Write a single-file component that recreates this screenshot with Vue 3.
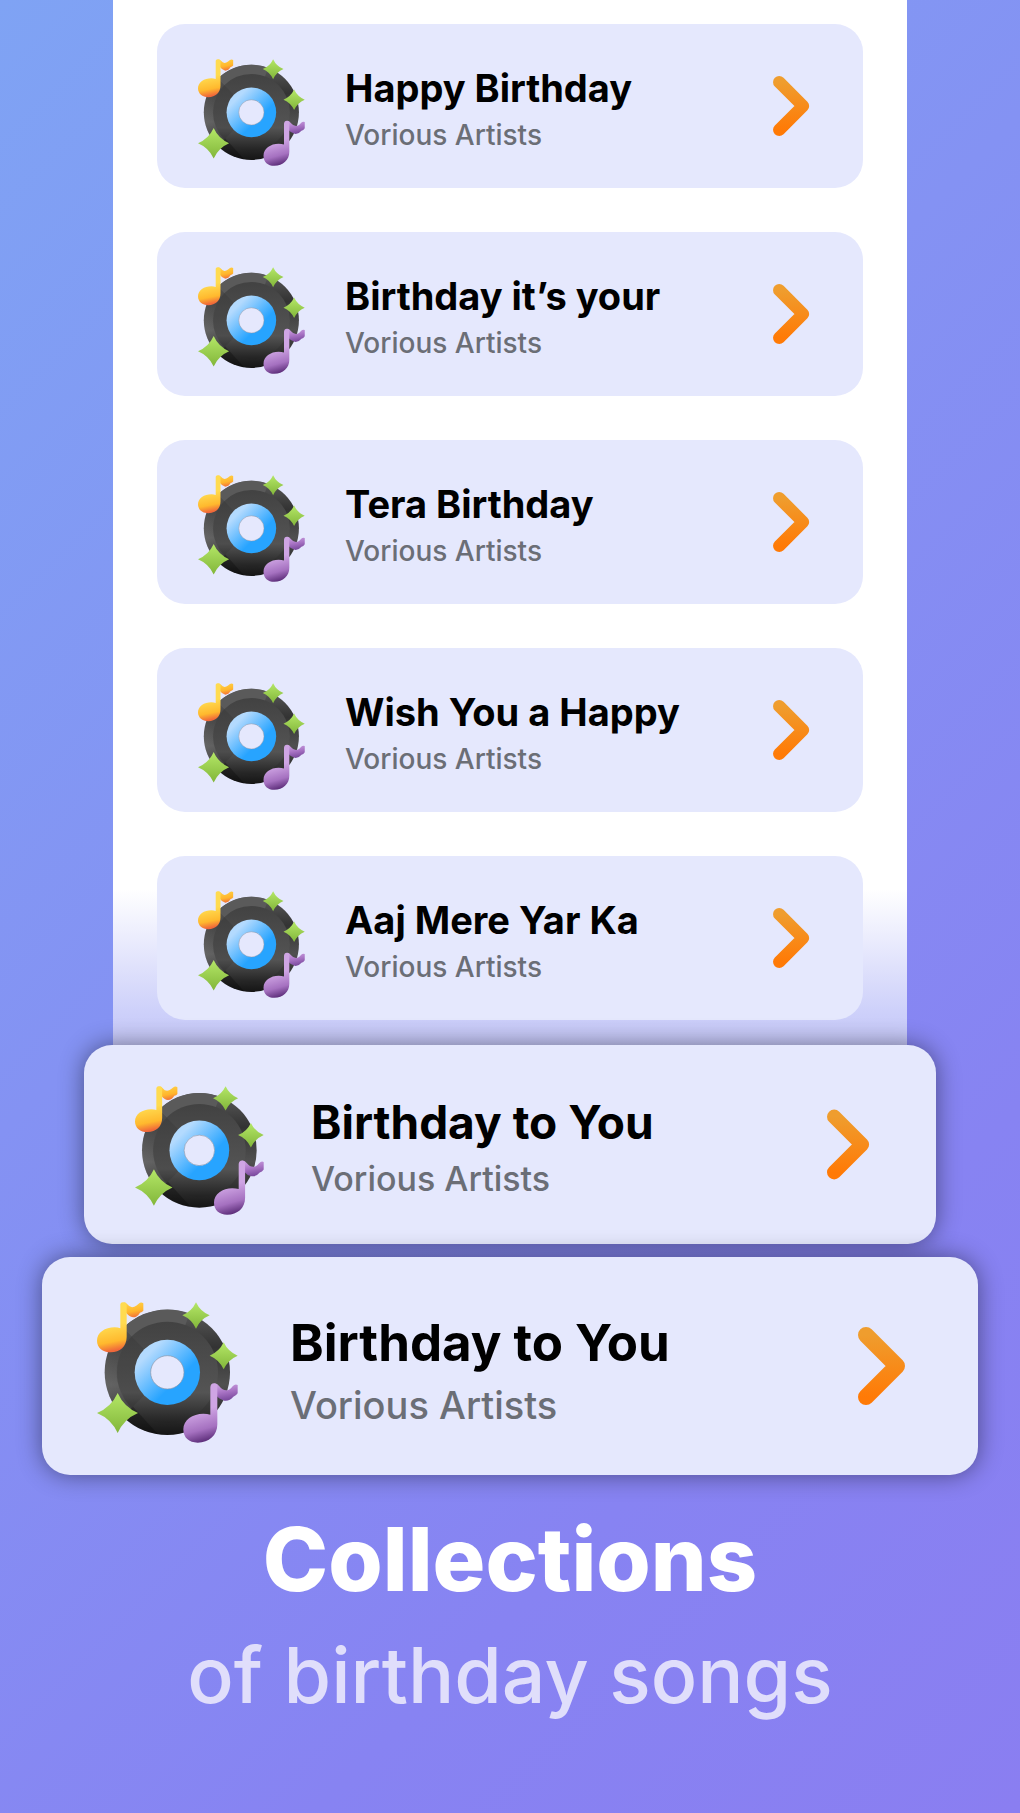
<template>
  <main class="songs">
    <svg class="songs__sprite" aria-hidden="true">
      <defs>
        <linearGradient id="rim" x1="0" y1="0" x2="0" y2="1">
          <stop offset="0" stop-color="#5a5a5a" />
          <stop offset="0.3" stop-color="#333" />
          <stop offset="0.6" stop-color="#505050" />
          <stop offset="0.85" stop-color="#2c2c2c" />
          <stop offset="1" stop-color="#151515" />
        </linearGradient>
        <linearGradient id="groove" x1="0" y1="0" x2="0" y2="1">
          <stop offset="0" stop-color="#424242" />
          <stop offset="0.7" stop-color="#545454" />
          <stop offset="1" stop-color="#222" />
        </linearGradient>
        <linearGradient id="shine" x1="0" y1="0" x2="1" y2="0">
          <stop offset="0" stop-color="#fff" stop-opacity="0.12" />
          <stop offset="1" stop-color="#fff" stop-opacity="0" />
        </linearGradient>
        <linearGradient id="blue" x1="0.15" y1="0.15" x2="0.8" y2="0.8">
          <stop offset="0.1" stop-color="#b3dafe" />
          <stop offset="0.75" stop-color="#27a4ff" />
        </linearGradient>
        <linearGradient id="green" x1="0" y1="0" x2="0" y2="1">
          <stop offset="0" stop-color="#b4e767" />
          <stop offset="1" stop-color="#82b63a" />
        </linearGradient>
        <linearGradient id="yellow" x1="60" y1="130" x2="75" y2="204" gradientUnits="userSpaceOnUse">
          <stop offset="0" stop-color="#ffdb50" />
          <stop offset="0.65" stop-color="#ffb92e" />
          <stop offset="1" stop-color="#f0683a" />
        </linearGradient>
        <linearGradient id="yellow-flag" x1="140" y1="54" x2="150" y2="104" gradientUnits="userSpaceOnUse">
          <stop offset="0" stop-color="#ffd54a" />
          <stop offset="0.6" stop-color="#ffb52c" />
          <stop offset="1" stop-color="#f0683a" />
        </linearGradient>
        <linearGradient id="purple" x1="340" y1="385" x2="365" y2="475" gradientUnits="userSpaceOnUse">
          <stop offset="0" stop-color="#cfa5e4" />
          <stop offset="0.6" stop-color="#a571c0" />
          <stop offset="1" stop-color="#5c2d79" />
        </linearGradient>
        <linearGradient id="purple-flag" x1="420" y1="298" x2="430" y2="352" gradientUnits="userSpaceOnUse">
          <stop offset="0" stop-color="#cda3e3" />
          <stop offset="0.5" stop-color="#a873c4" />
          <stop offset="1" stop-color="#76469a" />
        </linearGradient>
        <linearGradient id="orange" x1="0" y1="0" x2="0" y2="78" gradientUnits="userSpaceOnUse">
          <stop offset="0.1" stop-color="#ef9d2e" />
          <stop offset="0.9" stop-color="#ff7a06" />
        </linearGradient>
      </defs>
      <symbol id="disc" viewBox="52 53 423 423">
        <circle cx="263" cy="264" r="188" fill="url(#rim)" />
        <path d="M130 131A188 188 0 0 0 130 397L263 264Z" fill="url(#shine)" />
        <path d="M130 131A188 188 0 0 1 330 88L263 264Z" fill="#5a5a5a" />
        <circle cx="263" cy="264" r="152" fill="url(#groove)" />
        <path d="M156 157A152 152 0 0 0 156 371L263 264Z" fill="#000" opacity="0.08" />
        <path d="M130 397A188 188 0 0 0 235 450L160 367Z" fill="#000" opacity="0.25" />
        <circle cx="263" cy="264" r="98" fill="url(#blue)" />
        <circle cx="263" cy="264" r="50" fill="#e5e8fd" stroke="#8b96a8" stroke-width="2" />
        <path d="M349 54Q362 82 390 93Q362 105 349 133Q336 105 308 93Q336 82 349 54Z" fill="url(#green)" />
        <path d="M432 174Q445 202 474 214Q445 226 432 255Q419 226 390 214Q419 202 432 174Z" fill="url(#green)" />
        <path d="M114 326Q133 368 175 386Q133 404 114 446Q95 404 52 386Q95 368 114 326Z" fill="url(#green)" />
        <path d="M132 54Q139 54 143 60Q152 72 164 67Q171 64 177 58Q184 52 191 57V79Q187 84 181 85Q173 99 160 99Q148 98 138 84Z" fill="url(#yellow-flag)" />
        <path d="M122 60Q123 53 131 54Q139 54 141 61V158C141 186 121 204 93 204C69 204 52 190 52 169C52 145 76 129 105 129Q115 129 122 132Z" fill="url(#yellow)" />
        <path d="M404 297Q413 297 419 306Q432 322 448 316Q454 313 459 306Q466 298 474 302V327Q469 335 461 337Q450 351 434 349Q420 346 409 333Z" fill="url(#purple-flag)" />
        <path d="M392 309Q393 297 403 297Q412 297 413 308V420C413 453 388 475 354 475C328 475 311 460 311 435C311 407 339 388 371 388Q383 388 392 391Z" fill="url(#purple)" />
      </symbol>
      <symbol id="chevron" viewBox="0 0 48 78">
        <path d="M8 8L39 39L8 70" fill="none" stroke="url(#orange)" stroke-width="16" stroke-linecap="round" stroke-linejoin="round" />
      </symbol>
    </svg>

    <section class="songs__panel">
      <a v-for="title in titles" :key="title" href="#" class="song">
        <svg class="song__disc" aria-hidden="true"><use href="#disc" /></svg>
        <span class="song__text">
          <span class="song__title">{{ title }}</span>
          <span class="song__artist">Vorious Artists</span>
        </span>
        <svg class="song__chevron" aria-hidden="true"><use href="#chevron" /></svg>
      </a>
    </section>

    <section class="songs__featured">
      <a v-for="size in ['md', 'lg']" :key="size" href="#" :class="['song', `song--${size}`]">
        <svg class="song__disc" aria-hidden="true"><use href="#disc" /></svg>
        <span class="song__text">
          <span class="song__title">Birthday to You</span>
          <span class="song__artist">Vorious Artists</span>
        </span>
        <svg class="song__chevron" aria-hidden="true"><use href="#chevron" /></svg>
      </a>
    </section>

    <h1 class="songs__heading">Collections</h1>
    <p class="songs__subheading">of birthday songs</p>
  </main>
</template>

<script setup>
const titles = [
  'Happy Birthday',
  'Birthday it’s your',
  'Tera Birthday',
  'Wish You a Happy',
  'Aaj Mere Yar Ka'
]
</script>

<style>
body {
  margin: 0;
}
</style>

<style scoped>
.songs {
  display: flex;
  flex-direction: column;
  box-sizing: border-box;
  min-height: 100vh;
  font-family: Inter, "Open Sans", sans-serif;
  background: linear-gradient(135deg, #7fa3f4 0%, #8492f3 40%, #8783f2 75%, #8a7ef1 100%);
}

.songs__sprite {
  position: absolute;
  width: 0;
  height: 0;
}

.songs__panel {
  display: flex;
  flex-direction: column;
  gap: 44px;
  margin: 0 113px;
  padding: 24px 44px 25px;
  background: linear-gradient(to top, #c5c7f8 0, #cdd0fa 32px, #fff 156px);
}

.song {
  display: flex;
  align-items: center;
  box-sizing: border-box;
  height: 164px;
  padding: 0 53px 0 41px;
  color: #000;
  text-decoration: none;
  background: #e5e8fd;
  border-radius: 28px;
}

.song__disc {
  flex: none;
  width: 107px;
  height: 107px;
  margin-top: 12px;
}

.song__text {
  display: flex;
  flex: 1;
  flex-direction: column;
  padding-top: 10px;
  margin-left: 40px;
  white-space: nowrap;
}

.song__title {
  font-size: 38px;
  font-weight: 700;
  line-height: 48px;
}

.song__artist {
  font-size: 28px;
  font-weight: 500;
  line-height: 46px;
  color: #6b6e76;
}

.song__chevron {
  flex: none;
  width: 37px;
  height: 60px;
}

.songs__featured {
  display: flex;
  flex-direction: column;
  gap: 13px;
}

.song--md,
.song--lg {
  box-shadow: 0 0 24px rgba(0, 0, 0, 0.45);
}

.song--md {
  height: 199px;
  margin: 0 84px;
  padding: 0 66px 0 51px;
}

.song--md .song__disc {
  width: 129px;
  height: 129px;
}

.song--md .song__text {
  margin-left: 47px;
}

.song--md .song__title {
  font-size: 46px;
  line-height: 58px;
}

.song--md .song__artist {
  font-size: 34px;
  line-height: 56px;
}

.song--md .song__chevron {
  width: 43px;
  height: 71px;
}

.song--lg {
  height: 218px;
  margin: 0 42px;
  padding: 0 72px 0 55px;
}

.song--lg .song__disc {
  width: 141px;
  height: 141px;
}

.song--lg .song__text {
  padding-top: 14px;
  margin-left: 52px;
}

.song--lg .song__title {
  font-size: 51px;
  line-height: 64px;
}

.song--lg .song__artist {
  font-size: 38px;
  line-height: 60px;
}

.song--lg .song__chevron {
  width: 48px;
  height: 78px;
}

.songs__heading {
  margin: 32px 0 0;
  font-size: 88px;
  font-weight: 800;
  line-height: 104px;
  color: #fff;
  text-align: center;
}

.songs__subheading {
  margin: 14px 0 0;
  font-size: 77px;
  font-weight: 500;
  line-height: 100px;
  color: #e0defb;
  text-align: center;
}
</style>
